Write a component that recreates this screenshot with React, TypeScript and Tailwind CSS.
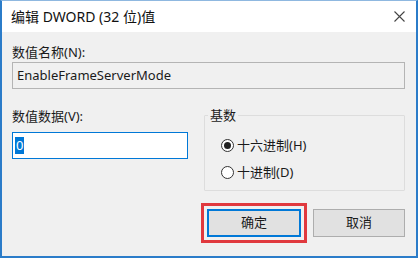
import React, { useState } from 'react';

const FONT = "font-['Noto_Sans','Noto_Sans_CJK_SC',sans-serif]";

const Radio = ({ checked, label, onClick }: { checked: boolean; label: string; onClick: () => void }) => (
  <button onClick={onClick} className="flex items-center h-[16px] text-[13px] text-[#1a1a1a]">
    <span className="w-[13px] h-[13px] rounded-full border border-[#333] bg-white flex items-center justify-center">
      {checked && <span className="w-[7px] h-[7px] rounded-full bg-[#222]" />}
    </span>
    <span className="ml-[3px] leading-[16px]">{label}</span>
  </button>
);

export default function App() {
  const [radix, setRadix] = useState<'hex' | 'dec'>('hex');

  return (
    <div className={`w-[418px] h-[258px] bg-[#f0f0f0] border-x-2 border-b-2 border-t border-[#2b7cc9] border-t-[#8fb8e0] flex flex-col ${FONT}`}>
      {/* title bar */}
      <div className="h-[31px] bg-white flex items-center justify-between pl-[9px] pr-[10px]">
        <span className="text-[14px] text-[#111] leading-[18px]">编辑 DWORD (32 位)值</span>
        <svg width="11" height="11" viewBox="0 0 11 11" className="mr-[1px]">
          <path d="M0.5 0.5 L10.5 10.5 M10.5 0.5 L0.5 10.5" stroke="#444" strokeWidth="1.1" fill="none" />
        </svg>
      </div>

      <div className="flex-1 flex flex-col pl-[10px] pr-[11px] pt-[12px]">
        <div className="text-[13px] leading-[16px] text-[#1a1a1a]">数值名称(N):</div>
        <div className="mt-[2px] h-[27px] border border-[#b4b4b4] bg-[#f0f0f0] flex items-center pl-[4px] text-[13px] text-[#1a1a1a]">
          EnableFrameServerMode
        </div>

        <div className="mt-[19px] flex items-start">
          <div className="w-[176px] flex flex-col">
            <div className="text-[13px] leading-[16px] text-[#1a1a1a]">数值数据(V):</div>
            <div className="mt-[8px] h-[27px] border border-[#0078d7] bg-white flex items-center pl-[2px]">
              <span className="bg-[#0078d7] text-white text-[13px] leading-[17px] px-[1px]">0</span>
            </div>
          </div>

          <fieldset className="ml-[16px] flex-1 h-[84px] border border-[#dddddd] rounded-[1px] px-[16px] pt-[14px] -mt-[1px]">
            <legend className="text-[13px] leading-[16px] text-[#1a1a1a] px-[2px] -ml-[13px]">基数</legend>
            <div className="flex flex-col gap-[11px]">
              <Radio checked={radix === 'hex'} label="十六进制(H)" onClick={() => setRadix('hex')} />
              <Radio checked={radix === 'dec'} label="十进制(D)" onClick={() => setRadix('dec')} />
            </div>
          </fieldset>
        </div>

        <div className="mt-[12px] flex justify-end items-center">
          <div className="border-[3px] border-[#e0393e] p-[3px]">
            <button className="w-[94px] h-[28px] bg-[#e1e1e1] border-2 border-[#0078d7] text-[13px] text-[#1a1a1a]">确定</button>
          </div>
          <button className="ml-[6px] w-[92px] h-[28px] bg-[#e1e1e1] border border-[#adadad] text-[13px] text-[#1a1a1a]">取消</button>
        </div>
      </div>
    </div>
  );
}
